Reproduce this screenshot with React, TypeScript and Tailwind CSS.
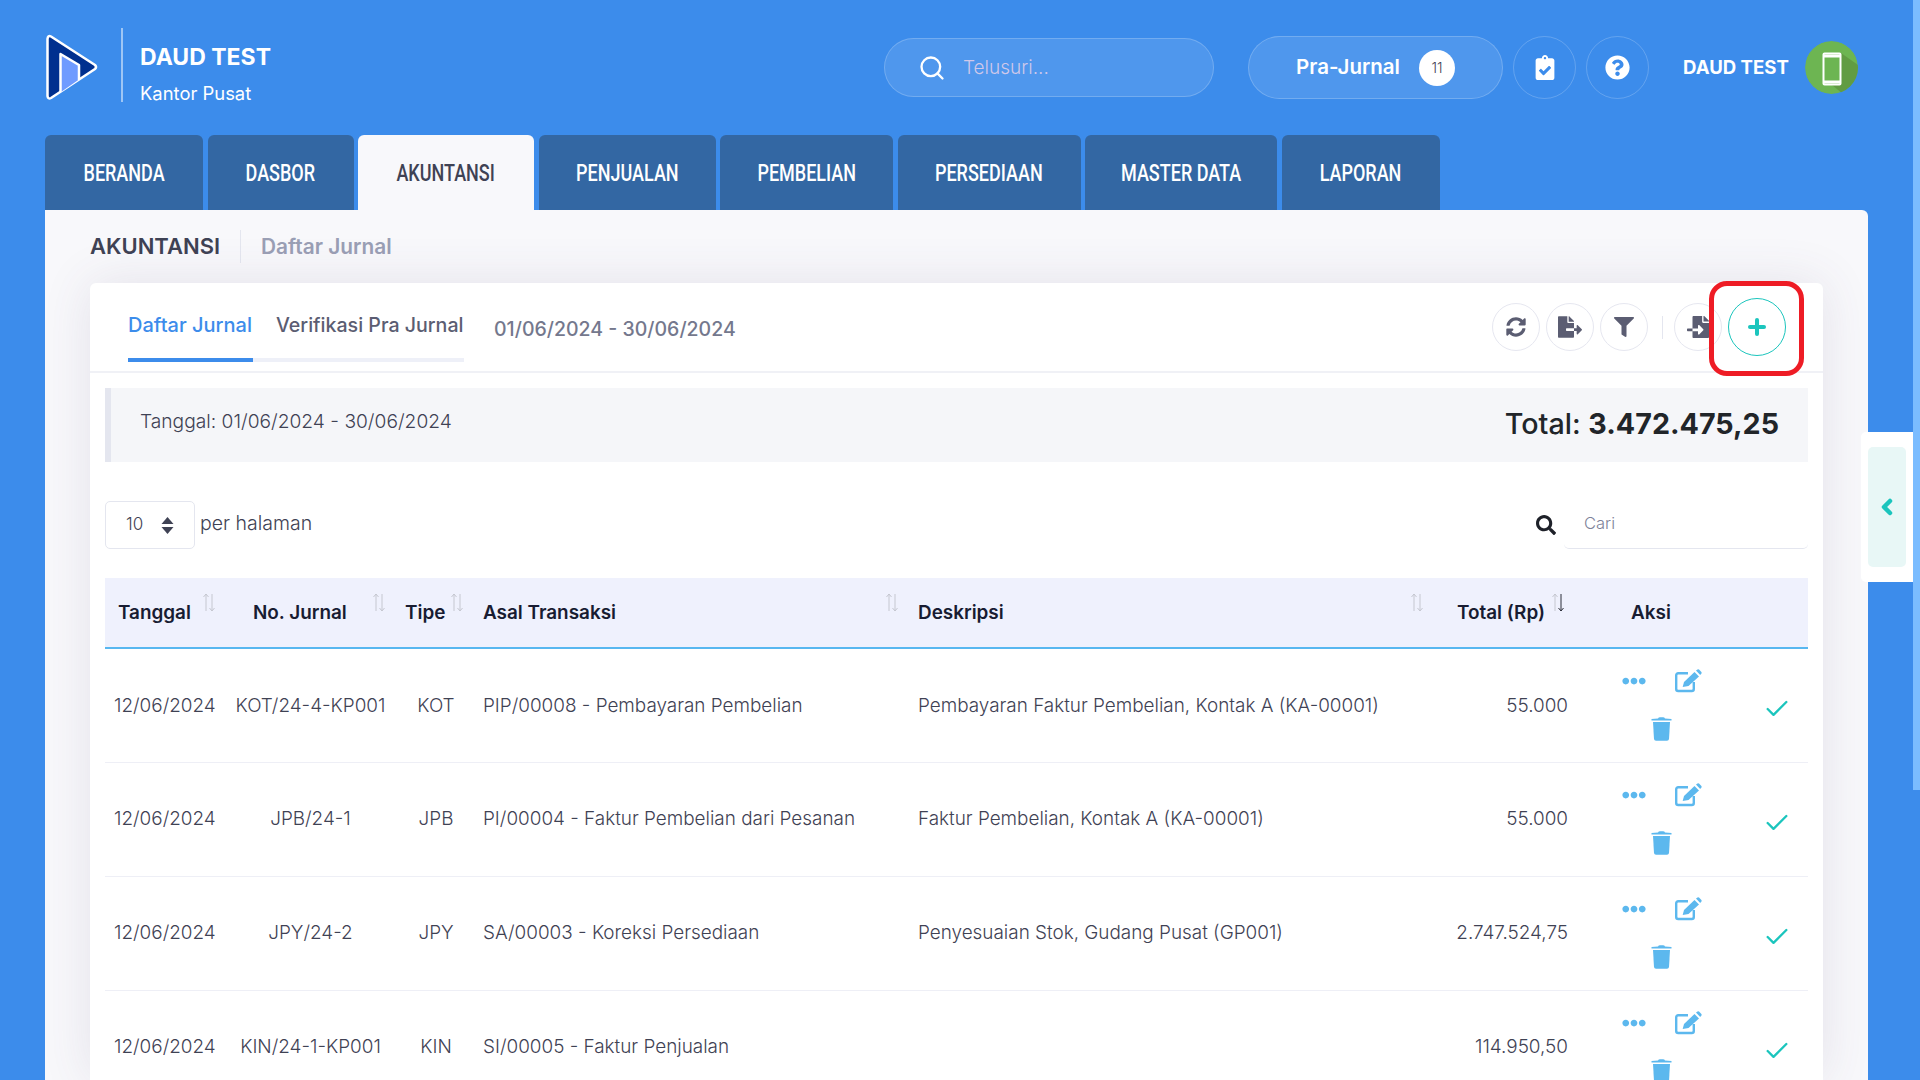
import { Search, Check, ChevronLeft, Plus } from 'lucide-react'
import { FaClipboardCheck, FaQuestionCircle, FaSyncAlt, FaFileExport, FaFilter, FaFileImport, FaSearch, FaEllipsisH } from 'react-icons/fa'

const tabs = [
  { label: 'BERANDA', width: 'w-[158px]' },
  { label: 'DASBOR', width: 'w-[146px]' },
  { label: 'AKUNTANSI', width: 'w-[176px]', active: true },
  { label: 'PENJUALAN', width: 'w-[177px]' },
  { label: 'PEMBELIAN', width: 'w-[173px]' },
  { label: 'PERSEDIAAN', width: 'w-[183px]' },
  { label: 'MASTER DATA', width: 'w-[192px]' },
  { label: 'LAPORAN', width: 'w-[158px]' },
]

const rows = [
  { date: '12/06/2024', no: 'KOT/24-4-KP001', type: 'KOT', source: 'PIP/00008 - Pembayaran Pembelian', desc: 'Pembayaran Faktur Pembelian, Kontak A (KA-00001)', total: '55.000' },
  { date: '12/06/2024', no: 'JPB/24-1', type: 'JPB', source: 'PI/00004 - Faktur Pembelian dari Pesanan', desc: 'Faktur Pembelian, Kontak A (KA-00001)', total: '55.000' },
  { date: '12/06/2024', no: 'JPY/24-2', type: 'JPY', source: 'SA/00003 - Koreksi Persediaan', desc: 'Penyesuaian Stok, Gudang Pusat (GP001)', total: '2.747.524,75' },
  { date: '12/06/2024', no: 'KIN/24-1-KP001', type: 'KIN', source: 'SI/00005 - Faktur Penjualan', desc: '', total: '114.950,50' },
]

function Logo() {
  return (
    <svg width="52" height="67" viewBox="0 0 52 67">
      <path d="M5 2.5 L49 31 Q51 33 49 35 L5 64 Q2 65.5 1.5 62 V5 Q2 1 5 2.5 Z" fill="#00308f" stroke="#fff" strokeWidth="2.5" strokeLinejoin="round" />
      <path d="M14.5 20 L33 31 V45.5 L15 58 Z" fill="#6f9bff" />
      <path d="M14.5 58 V20 L33 31 V46" fill="none" stroke="#fff" strokeWidth="2.5" strokeLinejoin="round" />
    </svg>
  )
}

function Avatar() {
  return (
    <svg width="53" height="53" viewBox="0 0 53 53" className="rounded-full">
      <circle cx="26.5" cy="26.5" r="26.5" fill="#6db552" />
      <path d="M36 12 L53 24 V53 H38 L27 44 Z" fill="#619c43" />
      <rect x="18.5" y="12.5" width="17" height="31" rx="1" fill="#6db552" stroke="#fff" strokeWidth="2" />
      <path d="M18 15 H36 M18 41 H36" stroke="#fff" strokeWidth="3" />
    </svg>
  )
}

function SortIcon({ active = false }: { active?: boolean }) {
  return (
    <svg width="14" height="19" viewBox="0 0 14 19" fill="none" strokeWidth="1">
      <path d="M4 18 V1 M1.5 4 L4 1 L6.5 4" stroke="#c5c7d0" />
      <path d="M10 1 V18 M7.5 15 L10 18 L12.5 15" stroke={active ? '#2b2d38' : '#c5c7d0'} />
    </svg>
  )
}

function SelectArrows() {
  return (
    <svg width="13" height="17" viewBox="0 0 13 17" fill="#3f4254">
      <path d="M6.5 0 L12.5 7 H.5 Z" />
      <path d="M6.5 17 L12.5 10 H.5 Z" />
    </svg>
  )
}

function EditIcon() {
  return (
    <svg width="27" height="24" viewBox="0 0 27 24" fill="#5cb8ee">
      <path d="M13 4.2H3.2a2 2 0 0 0-2 2V20a2 2 0 0 0 2 2H16.8a2 2 0 0 0 2-2V13" fill="none" stroke="#5cb8ee" strokeWidth="2.4" />
      <path d="M7.7 18 L9 13 L19.5 3 L24 7.5 L13.5 17 Z" />
      <path d="M21 1.6 L22.5 0.4 Q23.3 0 24 .6 L26.4 3 Q27 3.8 26.4 4.6 L25.2 6 Z" />
    </svg>
  )
}

function TrashIcon() {
  return (
    <svg width="21" height="24" viewBox="0 0 21 24" fill="#5cb8ee">
      <path d="M7 1.5 Q7.5 .3 9 .3 H12 Q13.5 .3 14 1.5 L20.5 2 V3.5 H.5 V2 Z" />
      <path d="M2 5 H19 L18 22 Q17.8 23.7 16 23.7 H5 Q3.2 23.7 3 22 Z" />
    </svg>
  )
}

function RoundIcon({ children }: { children: React.ReactNode }) {
  return (
    <div className="flex h-[48px] w-[48px] items-center justify-center rounded-full border border-[#e6e7f0] text-[#5b5d72]">
      {children}
    </div>
  )
}

export default function App() {
  return (
    <div className="relative flex h-screen flex-col overflow-hidden bg-[#3c8ceb] font-['Inter',sans-serif]">
      {/* Header */}
      <header className="flex h-[135px] shrink-0 items-center pl-[46px]">
        <Logo />
        <div className="-mt-[6px] ml-[23px] h-[74px] w-[2px] bg-white/50" />
        <div className="ml-[17px] mt-[11px] w-[200px] text-white">
          <div className="text-[23px] font-bold leading-[28px]">DAUD TEST</div>
          <div className="mt-[11px] text-[18.4px] leading-[22px]">Kantor Pusat</div>
        </div>
        <div className="ml-[544px] flex h-[59px] w-[330px] items-center rounded-full border border-white/20 bg-white/10 pl-[33px]">
          <Search className="h-[28px] w-[28px] text-white" strokeWidth={2} />
          <span className="ml-[17px] mt-[2px] text-[19px] font-light text-[#cfc8ea]">Telusuri...</span>
        </div>
        <div className="ml-[34px] flex h-[63px] w-[255px] items-center justify-center rounded-full border border-white/20 bg-white/10 text-white">
          <span className="text-[20.5px] font-semibold">Pra-Jurnal</span>
          <span className="ml-[19px] flex h-[36px] w-[36px] items-center justify-center rounded-full bg-white text-[14px] font-light text-[#3f4254]">11</span>
        </div>
        <div className="ml-[10px] flex h-[63px] w-[63px] items-center justify-center rounded-full border border-white/20 text-white">
          <FaClipboardCheck className="h-[25px] w-[20px]" />
        </div>
        <div className="ml-[10px] flex h-[63px] w-[63px] items-center justify-center rounded-full border border-white/20 text-white">
          <FaQuestionCircle className="h-[25px] w-[25px]" />
        </div>
        <span className="ml-[34px] text-[18.6px] font-bold text-white">DAUD TEST</span>
        <div className="ml-[16px]"><Avatar /></div>
      </header>

      {/* Tabs */}
      <nav className="flex h-[75px] shrink-0 gap-[4.5px] pl-[45px]">
        {tabs.map((tab) => (
          <div
            key={tab.label}
            className={`${tab.width} flex items-center justify-center rounded-t-[6px] font-['Roboto',sans-serif] text-[24px] font-medium ${tab.active ? 'bg-[#f8f8fb] text-[#3f4254]' : 'bg-[#3367a3] text-white'}`}
          >
            <span className="inline-block whitespace-nowrap scale-x-[0.75]">{tab.label}</span>
          </div>
        ))}
      </nav>

      {/* Content */}
      <main className="ml-[45px] mr-[52px] flex min-h-0 flex-1 flex-col rounded-tr-[6px] bg-[#f8f8fb] px-[45px]">
        <div className="flex h-[73px] shrink-0 items-center">
          <span className="text-[22px] font-semibold text-[#3f4254]">AKUNTANSI</span>
          <div className="ml-[20px] h-[33px] w-px bg-[#e4e6ef]" />
          <span className="ml-[20px] mt-[1px] text-[20.8px] font-semibold text-[#9a9fb5]">Daftar Jurnal</span>
        </div>

        <section className="min-h-0 flex-1 rounded-t-[6px] bg-white shadow-[0_0_50px_rgba(82,63,105,0.12)]">
          {/* Card toolbar */}
          <div className="flex h-[90px] items-center border-b-2 border-[#f0f1f6] pl-[38px] pr-[37px]">
            <div className="flex h-full flex-col justify-end">
              <div className="flex gap-[23px] border-b-[4px] border-[#eef0f8] pb-[20px]">
                <span className="relative w-[125px] whitespace-nowrap text-[20px] font-medium leading-[26px] text-[#3c8ceb]">
                  Daftar Jurnal
                  <span className="absolute bottom-[-24px] left-0 right-0 h-[4px] bg-[#3c8ceb]" />
                </span>
                <span className="w-[188px] whitespace-nowrap text-[19.6px] font-medium leading-[26px] text-[#5b5d72]">Verifikasi Pra Jurnal</span>
              </div>
              <div className="h-[9px]" />
            </div>
            <span className="ml-[30px] mt-[5px] text-[19.5px] font-medium text-[#74788d]">01/06/2024 - 30/06/2024</span>
            <div className="ml-auto flex items-center gap-[6px]">
              <RoundIcon><FaSyncAlt className="h-[20px] w-[20px]" /></RoundIcon>
              <RoundIcon><FaFileExport className="h-[22px] w-[24px]" /></RoundIcon>
              <RoundIcon><FaFilter className="h-[20px] w-[20px]" /></RoundIcon>
              <div className="ml-[8px] mr-[5px] h-[23px] w-px bg-[#e4e6ef]" />
              <RoundIcon><FaFileImport className="h-[22px] w-[24px]" /></RoundIcon>
              <div className="flex h-[58px] w-[58px] items-center justify-center rounded-full border border-[#1bc5bd] bg-white text-[#1bc5bd]">
                <Plus className="h-[24px] w-[24px]" strokeWidth={4} />
              </div>
            </div>
          </div>

          <div className="px-[15px] pt-[15px]">
            {/* Info strip */}
            <div className="flex h-[74px] items-center justify-between border-l-[6px] border-[#e4e6ef] bg-[#f5f6f9] pl-[29px] pr-[29px]">
              <span className="-mt-[8px] text-[19.2px] font-light text-[#3f4254]">Tanggal: 01/06/2024 - 30/06/2024</span>
              <span className="-mt-[2px] text-[28.7px] font-medium text-[#212529]">Total: <b className="font-bold">3.472.475,25</b></span>
            </div>

            {/* Per page and search */}
            <div className="mt-[39px] flex h-[48px] items-center">
              <div className="flex h-full w-[90px] items-center rounded-[5px] border border-[#e4e6ef] pl-[20px] text-[17px] font-light text-[#3f4254]">
                <span>10</span>
                <span className="ml-[18px] flex"><SelectArrows /></span>
              </div>
              <span className="-mt-[2px] ml-[5px] text-[19.5px] font-light text-[#3f4254]">per halaman</span>
              <FaSearch className="ml-auto h-[20px] w-[20px] text-[#1e2129]" />
              <div className="ml-[8px] flex h-full w-[244px] items-center rounded-b-[5px] border-b border-[#e4e6ef] pl-[20px] text-[16.5px] font-light text-[#7e8299]">
                <span className="-mt-[2px]">Cari</span>
              </div>
            </div>

            {/* Table */}
            <table className="mt-[29px] w-full table-fixed border-collapse text-left text-[18.9px]">
              <colgroup>
                <col className="w-[123px]" />
                <col className="w-[165px]" />
                <col className="w-[86px]" />
                <col className="w-[434px]" />
                <col className="w-[537px]" />
                <col className="w-[122px]" />
                <col />
              </colgroup>
              <thead>
                <tr className="h-[70px] border-b-2 border-[#58b7f0] bg-[#eff1fd] text-[#181c32]">
                  <th className="relative pl-[13px] pt-[2px] font-semibold">Tanggal<span className="absolute right-[12px] top-[15px]"><SortIcon /></span></th>
                  <th className="relative pl-[25px] pt-[2px] font-semibold">No. Jurnal<span className="absolute right-[7px] top-[15px]"><SortIcon /></span></th>
                  <th className="relative pl-[12px] pt-[2px] font-semibold">Tipe<span className="absolute right-[15px] top-[15px]"><SortIcon /></span></th>
                  <th className="relative pl-[4px] pt-[2px] font-semibold">Asal Transaksi<span className="absolute right-[14px] top-[15px]"><SortIcon /></span></th>
                  <th className="relative pl-[5px] pt-[2px] font-semibold">Deskripsi<span className="absolute right-[26px] top-[15px]"><SortIcon /></span></th>
                  <th className="relative whitespace-nowrap pl-[7px] pt-[2px] font-semibold">Total (Rp)<span className="absolute right-[7px] top-[15px]"><SortIcon active /></span></th>
                  <th className="pl-[59px] pt-[2px] font-semibold">Aksi</th>
                </tr>
              </thead>
              <tbody className="font-light text-[#3f4254]">
                {rows.map((row) => (
                  <tr key={row.no} className="h-[114px] border-b border-[#eeeff6]">
                    <td className="pl-[9px] pt-[1px]">{row.date}</td>
                    <td className="pt-[1px] text-center">{row.no}</td>
                    <td className="pt-[1px] text-center">{row.type}</td>
                    <td className="pl-[4px] pt-[1px]">{row.source}</td>
                    <td className="pl-[5px] pt-[1px]">{row.desc}</td>
                    <td className="pr-[4px] pt-[1px] text-right">{row.total}</td>
                    <td>
                      <div className="flex items-center pl-[35px]">
                        <div className="flex w-[108px] flex-wrap justify-center">
                          <div className="flex h-[48px] w-[54px] items-center justify-center text-[#5cb8ee]"><FaEllipsisH className="h-[24px] w-[24px]" /></div>
                          <div className="flex h-[48px] w-[54px] items-center justify-center"><EditIcon /></div>
                          <div className="flex h-[48px] w-[54px] items-center justify-center"><TrashIcon /></div>
                        </div>
                        <Check className="ml-[48px] mt-[8px] h-[28px] w-[28px] text-[#1bc5bd]" strokeWidth={2} />
                      </div>
                    </td>
                  </tr>
                ))}
              </tbody>
            </table>
          </div>
        </section>
      </main>

      {/* Highlight around the add button */}
      <div className="absolute left-[1709px] top-[281px] h-[95px] w-[95px] rounded-[18px] border-[5px] border-[#ee1c25]" />

      {/* Side drawer toggle */}
      <div className="absolute right-[7px] top-[432px] flex h-[150px] w-[52px] items-center justify-center rounded-l-[5px] bg-white">
        <div className="flex h-[120px] w-[38px] items-center justify-center rounded-[5px] bg-[#e8f7f6] text-[#1bc5bd]">
          <ChevronLeft className="h-[24px] w-[24px]" strokeWidth={4.5} />
        </div>
      </div>

      {/* Scrollbar thumb */}
      <div className="absolute right-0 top-0 h-[790px] w-[7px] bg-[#7abcff]" />
    </div>
  )
}
